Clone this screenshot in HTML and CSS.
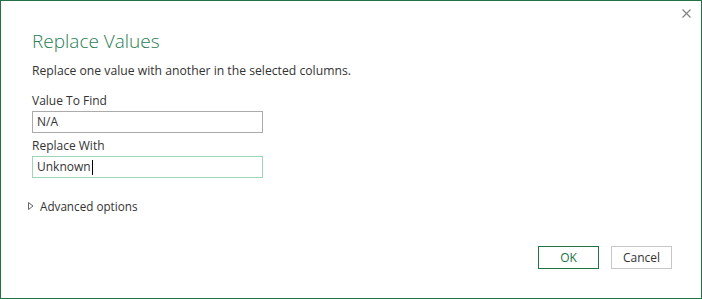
FILE: index.html
```html
<!DOCTYPE html>
<html lang="en">
<head>
  <meta charset="UTF-8">
  <title>Replace Values</title>
  <link rel="stylesheet" href="styles.css">
</head>
<body>
  <div class="dialog">
    <div class="topbar">
      <button class="close" title="Close">
        <svg width="9" height="9" viewBox="0 0 9 9"><path d="M0.5 0.5 L8.5 8.5 M8.5 0.5 L0.5 8.5" stroke="#808080" stroke-width="1.1" fill="none"/></svg>
      </button>
    </div>

    <div class="content">
      <h1 class="title">Replace Values</h1>
      <p class="intro">Replace one value with another in the selected columns.</p>

      <label class="label">Value To Find</label>
      <div class="field">N/A</div>

      <label class="label second">Replace With</label>
      <div class="field focused">Unknown<span class="caret"></span></div>

      <div class="advanced">
        <svg width="6" height="8" viewBox="0 0 6 8"><path d="M0.5 0.5 L5 4 L0.5 7.5 Z" stroke="#666" stroke-width="1" fill="none"/></svg>
        <span>Advanced options</span>
      </div>
    </div>

    <div class="actions">
      <button class="btn primary">OK</button>
      <button class="btn">Cancel</button>
    </div>
  </div>
</body>
</html>
```

FILE: styles.css
```css
html, body { margin: 0; padding: 0; background: #fff; }
body { font-family: "Open Sans", "Segoe UI", sans-serif; font-size: 12px; color: #333; }

.dialog { width: 702px; height: 299px; box-sizing: border-box; border: 1px solid #217346; display: flex; flex-direction: column; }

.topbar { display: flex; justify-content: flex-end; padding: 8px 10px 0 0; height: 18px; }
.close { width: 9px; height: 9px; padding: 0; border: none; background: none; display: flex; }

.content { padding-left: 31px; display: flex; flex-direction: column; align-items: flex-start; }
.title { margin: 0; padding-top: 1px; font-size: 19px; font-weight: 300; line-height: 27px; color: #2a7d52; }
.intro { margin: 8px 0 0; line-height: 16px; font-size: 12.2px; }

.label { display: block; margin-top: 14px; line-height: 16px; }
.label.second { margin-top: 5px; }

.field { margin-top: 2px; width: 231px; height: 22px; box-sizing: border-box; border: 1px solid #ababab; padding: 0 4px; line-height: 20px; display: flex; align-items: center; }
.field.focused { border-color: #9bd7b5; }
.caret { display: inline-block; width: 1px; height: 15px; background: #000; margin-left: 1px; }

.advanced { margin: 20px 0 0 -4px; display: flex; align-items: center; gap: 6px; line-height: 16px; }
.advanced span { font-size: 11.7px; }

.actions { margin-top: auto; margin-bottom: 29px; padding-right: 29px; display: flex; justify-content: flex-end; gap: 12px; }
.btn { width: 61px; height: 23px; box-sizing: border-box; border: 1px solid #c6c6c6; background: #fff; font-family: inherit; font-size: 12px; color: #333; padding: 0; }
.btn.primary { border-color: #217346; color: #217346; }
```
